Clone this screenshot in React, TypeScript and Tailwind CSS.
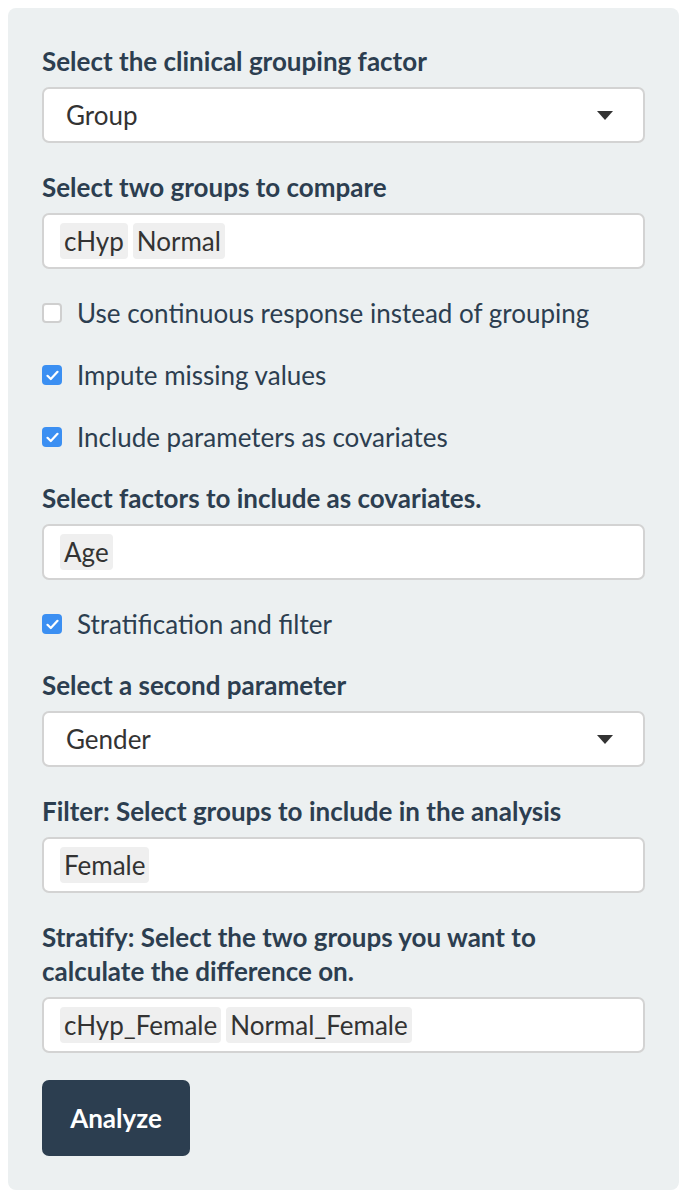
const Label = ({ children }: { children: React.ReactNode }) => (
  <label className="block mb-[9px] text-[26px] leading-[34px] font-bold text-[#2c3e50]">{children}</label>
);

const SelectBox = ({ value }: { value: string }) => (
  <div className="flex items-center justify-between h-[56px] pl-[22px] pr-[30px] bg-white border-2 border-[#d3d3d3] rounded-[7px] text-[26px] text-[#333]">
    <span>{value}</span>
    <svg width="16" height="9" viewBox="0 0 16 9">
      <path d="M0 0 L16 0 L8 9 Z" fill="#333" />
    </svg>
  </div>
);

const TagBox = ({ tags }: { tags: string[] }) => (
  <div className="flex items-center gap-[5px] h-[56px] px-[16px] bg-white border-2 border-[#d3d3d3] rounded-[7px]">
    {tags.map((t) => (
      <span key={t} className="px-[4px] h-[36px] leading-[36px] rounded-[4px] bg-[#efefef] text-[26px] text-[#333]">
        {t}
      </span>
    ))}
  </div>
);

const Check = ({ label, checked }: { label: string; checked?: boolean }) => (
  <div className="flex items-center h-[34px] text-[26px] text-[#2c3e50]">
    {checked ? (
      <span className="flex items-center justify-center w-[20px] h-[20px] rounded-[4px] bg-[#3b8ff2]">
        <svg width="13" height="11" viewBox="0 0 13 11">
          <path d="M1.5 5.8 L4.8 9 L11.5 1.8" fill="none" stroke="white" strokeWidth="2.2" strokeLinecap="round" strokeLinejoin="round" />
        </svg>
      </span>
    ) : (
      <span className="w-[20px] h-[20px] rounded-[4px] bg-white border-2 border-[#cfcfcf]" />
    )}
    <span className="ml-[15px]">{label}</span>
  </div>
);

export default function App() {
  return (
    <div className="bg-white min-h-[1200px] pt-[8px] pl-[8px]" style={{ fontFamily: "Lato, 'Liberation Sans', sans-serif" }}>
      <div className="w-[671px] h-[1182px] bg-[#ecf0f1] rounded-[8px] pt-[36px] px-[34px] flex flex-col gap-[27px]">
        <div>
          <Label>Select the clinical grouping factor</Label>
          <SelectBox value="Group" />
        </div>
        <div>
          <Label>Select two groups to compare</Label>
          <TagBox tags={["cHyp", "Normal"]} />
        </div>
        <div className="flex flex-col gap-[28px]">
          <Check label="Use continuous response instead of grouping" />
          <Check label="Impute missing values" checked />
          <Check label="Include parameters as covariates" checked />
        </div>
        <div>
          <Label>Select factors to include as covariates.</Label>
          <TagBox tags={["Age"]} />
        </div>
        <Check label="Stratification and filter" checked />
        <div>
          <Label>Select a second parameter</Label>
          <SelectBox value="Gender" />
        </div>
        <div>
          <Label>Filter: Select groups to include in the analysis</Label>
          <TagBox tags={["Female"]} />
        </div>
        <div>
          <Label>
            Stratify: Select the two groups you want to
            <br />
            calculate the difference on.
          </Label>
          <TagBox tags={["cHyp_Female", "Normal_Female"]} />
        </div>
        <div>
          <button className="w-[148px] h-[76px] rounded-[7px] bg-[#2c3e50] text-white text-[26px] font-bold">Analyze</button>
        </div>
      </div>
    </div>
  );
}
